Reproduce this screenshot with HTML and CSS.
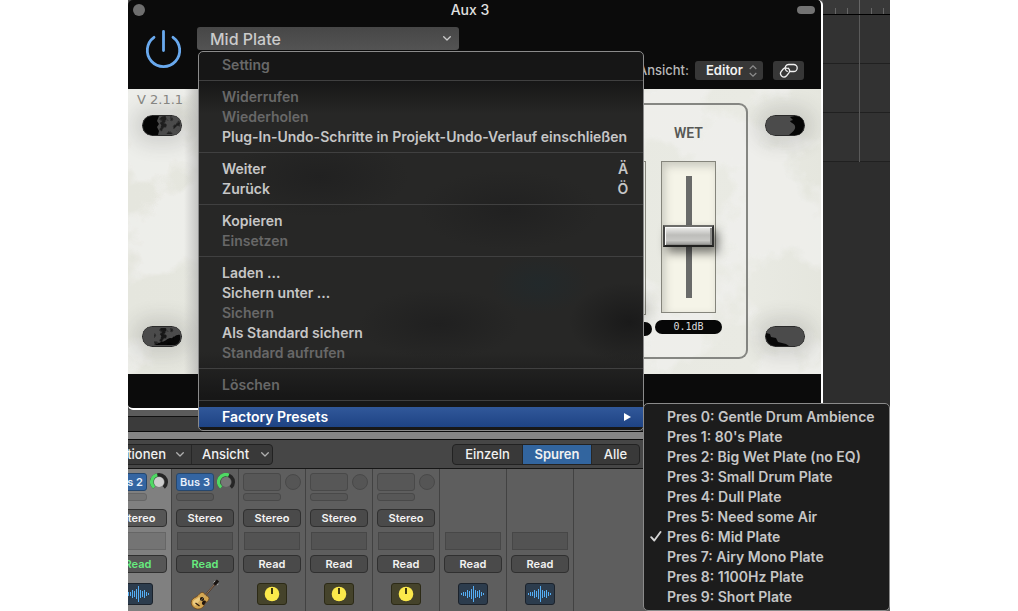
FILE: index.html
```html
<!DOCTYPE html>
<html lang="de">
<head>
<meta charset="utf-8">
<meta name="viewport" content="width=device-width, initial-scale=1">
<title>Aux 3</title>
<link rel="stylesheet" href="styles.css">
</head>
<body>
<svg class="defs" aria-hidden="true">
  <defs>
    <filter id="grunge" x="0" y="0" width="1" height="1">
      <feTurbulence type="fractalNoise" baseFrequency="0.16" numOctaves="3" seed="4"/>
      <feColorMatrix values="0 0 0 0 0  0 0 0 0 0  0 0 0 0 0  5 0 0 0 -2.4"/>
      <feComposite in2="SourceGraphic" operator="in"/>
    </filter>
    <filter id="plaster" x="0" y="0" width="1" height="1" color-interpolation-filters="sRGB">
      <feTurbulence type="fractalNoise" baseFrequency="0.012" numOctaves="5" seed="11"/>
      <feColorMatrix values="0 0 0 0 0.94  0 0 0 0 0.94  0 0 0 0 0.93  9 0 0 0 -4.2"/>
      <feComposite in2="SourceGraphic" operator="in"/>
    </filter>
    <symbol id="wave" viewBox="0 0 24 16">
      <path d="M.5 7v2M2.5 6v4M4.500 6v4M6.500 4v8M8.500 5v6M10.500 3v10M12.500 0v16M14.500 4v8M16.500 5v6M18.500 4v8M20.500 6v4M22.500 7v2" stroke="#55aef5" stroke-width="1"/>
    </symbol>
    <symbol id="dial" viewBox="0 0 16 16">
      <circle cx="8" cy="8" r="7.300" fill="#fbe94b"/>
      <path d="M8 2v6" stroke="#3f3a12" stroke-width="2"/>
    </symbol>
    <symbol id="bolt" viewBox="0 0 40 21">
      <rect x="0.500" y="0.500" width="39" height="20" rx="9" fill="#4b4b4b" stroke="#2a2a2a"/>
    </symbol>
    <symbol id="chev" viewBox="0 0 8 5">
      <path d="M.7.7 4 4 7.300.7" fill="none" stroke="currentColor" stroke-width="1.300" stroke-linecap="round" stroke-linejoin="round"/>
    </symbol>
  </defs>
</svg>
<main class="desk">
  <div class="arrange">
    <section class="plugin" aria-label="Aux 3">
      <header class="head">
        <div class="titlebar">
          <button class="close" aria-label="Schließen"></button>
          <h1 class="title">Aux 3</h1>
          <button class="pill" aria-label="Symbolleiste"></button>
        </div>
        <div class="tools">
          <button class="power" aria-label="Ein/Aus">
            <svg width="38" height="41" viewBox="0 0 38 41" fill="none" stroke="#69a9ee" stroke-width="2.800" stroke-linecap="round"><path d="M18.500 3.500v19M9 9.300a16.200 16.200 0 1 0 19 0"/></svg>
          </button>
          <div class="tool-rows">
            <button class="preset" aria-haspopup="menu" aria-expanded="true"><span>Mid Plate</span><svg width="8" height="5"><use href="#chev"/></svg></button>
            <div class="view">
              <label for="view">Ansicht:</label>
              <span class="select-wrap">
                <select id="view"><option>Editor</option></select>
                <svg class="updown" width="8" height="12" viewBox="0 0 8 12" fill="none" stroke="#8c8c8c" stroke-width="1.200"><path d="M.7 4 4 .8 7.300 4M.7 8 4 11.200 7.300 8"/></svg>
              </span>
              <button class="link" aria-label="Verknüpfen">
                <svg width="20" height="15" viewBox="0 0 20 15" fill="none" stroke="#f0f0f0" stroke-width="1.300" stroke-linecap="round"><path d="M8.200 5.300a3.600 3.600 0 0 0-4 .7L2.300 8.300a3.600 3.600 0 0 0 .3 4.700 3.600 3.600 0 0 0 5-.3l2.300-2.800a3.600 3.600 0 0 0-.6-4.700"/><path d="M11.300 8.500h3.400a3.500 3.500 0 0 0 0-7H9.600a3.500 3.500 0 0 0-3.200 4.900c.3.900 1 1.600 1.900 1.900"/></svg>
              </button>
            </div>
          </div>
        </div>
      </header>
      <div class="face">
        <svg class="plaster" aria-hidden="true"><rect width="100%" height="100%" filter="url(#plaster)"/></svg>
        <div class="rail rail-left">
          <span class="version">V 2.1.1</span>
          <svg class="bolt" width="40" height="21"><use href="#bolt"/><path d="M9 1h8l-2 5 2 3-2 3 2 4-1 4H9a9 9 0 0 1-8-9.500A9 9 0 0 1 9 1z" fill="#050505"/><rect x="15" y="1" width="23" height="18" rx="8" filter="url(#grunge)" opacity=".6"/></svg>
          <svg class="bolt" width="40" height="21"><use href="#bolt"/><path d="M38 9c-5-1-6 4-10 3-4 1-5 4-9 4l-6 3h20c4-1 6-5 5-10z" fill="#080808"/><rect x="12" y="2" width="20" height="17" filter="url(#grunge)" opacity=".7"/></svg>
        </div>
        <div class="panel">
          <div class="prev-slot"><span></span></div>
          <div class="wet">
            <label for="wet">WET</label>
            <div class="fader"><input id="wet" type="range" min="0" max="100" value="51"></div>
            <output for="wet">0.1dB</output>
          </div>
        </div>
        <div class="rail rail-right">
          <svg class="bolt" width="40" height="21"><use href="#bolt"/><path d="M30 1c6 0 9 4 9 9s-3 10-8 10h-7c3-3 7-5 6-9-1-3-4-3-5-5l3-1-3-3z" fill="#050505"/></svg>
          <svg class="bolt" width="40" height="21"><use href="#bolt"/><path d="M1 7l4 1 1 3 5 1 2 4 8 2 3 2H10C4 20 0 14 1 7z" fill="#080808"/></svg>
        </div>
      </div>
      <div class="foot"></div>
    </section>
    <div class="timeline"><div class="ruler"></div><div class="tracks"></div></div>
  </div>
  <div class="divider"></div>
  <div class="substrip"></div>
  <div class="splitter"></div>
  <div class="mixbar">
    <div class="group opts">
      <button><span>Optionen</span><svg width="8" height="5"><use href="#chev"/></svg></button>
      <button><span>Ansicht</span><svg width="8" height="5"><use href="#chev"/></svg></button>
    </div>
    <div class="group tabs">
      <button>Einzeln</button><button class="on" aria-pressed="true">Spuren</button><button>Alle</button>
    </div>
  </div>
  <div class="mixer">
    <div class="strip selected">
      <div class="send"><button class="bus">Bus 2</button><svg width="18" height="18" viewBox="0 0 18 18"><circle cx="9" cy="9" r="5" fill="#cdcdcd"/><g fill="none" stroke-width="3.400"><path d="M4.200 14.500A7.300 7.300 0 1 1 13.800 14.500" stroke="#262626"/><path d="M4.200 14.500A7.300 7.300 0 0 1 7.300 1.900" stroke="#4fd964"/></g></svg></div>
      <div class="send-low"></div>
      <button class="key">Stereo</button><div class="group-slot"></div><button class="key read">Read</button>
      <div class="icon wave"><svg width="24" height="16"><use href="#wave"/></svg></div>
    </div>
    <div class="strip">
      <div class="send"><button class="bus">Bus 3</button><svg width="18" height="18" viewBox="0 0 18 18"><circle cx="9" cy="9" r="5" fill="#777"/><g fill="none" stroke-width="3.400"><path d="M4.200 14.500A7.300 7.300 0 1 1 13.800 14.500" stroke="#262626"/><path d="M4.200 14.500A7.300 7.300 0 0 1 11.800 2.200" stroke="#4fd964"/></g></svg></div>
      <div class="send-low"></div>
      <button class="key">Stereo</button><div class="group-slot"></div><button class="key read">Read</button>
      <div class="icon guitar"><svg width="30" height="32" viewBox="0 0 30 32"><path d="M13 20 26 5" stroke="#4b3023" stroke-width="1.800"/><path d="M24.500 6.500 28 2.500" stroke="#181310" stroke-width="3"/><path d="M23.500 4.500 25 3M27 7l1.500-1" stroke="#aaa" stroke-width="1"/><path d="M10 15.500c2-2 4-1 5 1s4 1 4 4-3 3-4 5-2 5-6 5.500S1 28 1.200 24.500 4 20 6 19s2-2 4-3.500z" fill="#d3a651" stroke="#6b431c" stroke-width=".8"/><path d="M3 24c1-3 4-3 6-5l2 2-6 7c-1-1-2.500-2-2-4z" fill="#edcb80"/><circle cx="12" cy="21" r="2.100" fill="#1c130c"/><path d="M13 23c2-1 3 0 3 1l-2 3c-2 0-3-2-1-4z" fill="#20150d"/><path d="m5.500 25 4 3" stroke="#2b1a0e" stroke-width="1.200"/><path d="m8 26 16-19" stroke="#c9b48b" stroke-width=".5"/></svg></div>
    </div>
    <div class="strip">
      <div class="send"><span class="bus-empty"></span><span class="knob-empty"></span></div>
      <div class="send-low"></div>
      <button class="key">Stereo</button><div class="group-slot"></div><button class="key">Read</button>
      <div class="icon dial"><svg width="16" height="16"><use href="#dial"/></svg></div>
    </div>
    <div class="strip">
      <div class="send"><span class="bus-empty"></span><span class="knob-empty"></span></div>
      <div class="send-low"></div>
      <button class="key">Stereo</button><div class="group-slot"></div><button class="key">Read</button>
      <div class="icon dial"><svg width="16" height="16"><use href="#dial"/></svg></div>
    </div>
    <div class="strip">
      <div class="send"><span class="bus-empty"></span><span class="knob-empty"></span></div>
      <div class="send-low"></div>
      <button class="key">Stereo</button><div class="group-slot"></div><button class="key">Read</button>
      <div class="icon dial"><svg width="16" height="16"><use href="#dial"/></svg></div>
    </div>
    <div class="strip bare">
      <div class="group-slot"></div><button class="key">Read</button>
      <div class="icon wave"><svg width="24" height="16"><use href="#wave"/></svg></div>
    </div>
    <div class="strip bare">
      <div class="group-slot"></div><button class="key">Read</button>
      <div class="icon wave"><svg width="24" height="16"><use href="#wave"/></svg></div>
    </div>
  </div>

  <div class="menu settings" role="menu">
    <button role="menuitem" disabled>Setting</button>
    <hr>
    <button role="menuitem" disabled>Widerrufen</button>
    <button role="menuitem" disabled>Wiederholen</button>
    <button role="menuitem">Plug-In-Undo-Schritte in Projekt-Undo-Verlauf einschließen</button>
    <hr>
    <button role="menuitem"><span>Weiter</span><kbd>Ä</kbd></button>
    <button role="menuitem"><span>Zurück</span><kbd>Ö</kbd></button>
    <hr>
    <button role="menuitem">Kopieren</button>
    <button role="menuitem" disabled>Einsetzen</button>
    <hr>
    <button role="menuitem">Laden ...</button>
    <button role="menuitem">Sichern unter ...</button>
    <button role="menuitem" disabled>Sichern</button>
    <button role="menuitem">Als Standard sichern</button>
    <button role="menuitem" disabled>Standard aufrufen</button>
    <hr>
    <button role="menuitem" disabled>Löschen</button>
    <hr>
    <button role="menuitem" class="active" aria-haspopup="menu" aria-expanded="true"><span>Factory Presets</span><svg class="arrow" width="7" height="8" viewBox="0 0 7 8"><path d="M0 0v8l7-4z" fill="#fff"/></svg></button>
  </div>
  <div class="menu presets" role="menu">
    <button role="menuitemradio">Pres 0: Gentle Drum Ambience</button>
    <button role="menuitemradio">Pres 1: 80's Plate</button>
    <button role="menuitemradio">Pres 2: Big Wet Plate (no EQ)</button>
    <button role="menuitemradio">Pres 3: Small Drum Plate</button>
    <button role="menuitemradio">Pres 4: Dull Plate</button>
    <button role="menuitemradio">Pres 5: Need some Air</button>
    <button role="menuitemradio" class="checked" aria-checked="true"><svg class="tick" width="12" height="11" viewBox="0 0 12 11"><path d="M1.200 6.200 4.300 9.500 10.500 1" fill="none" stroke="#d4d4d4" stroke-width="1.900" stroke-linecap="round" stroke-linejoin="round"/></svg>Pres 6: Mid Plate</button>
    <button role="menuitemradio">Pres 7: Airy Mono Plate</button>
    <button role="menuitemradio">Pres 8: 1100Hz Plate</button>
    <button role="menuitemradio">Pres 9: Short Plate</button>
  </div>
</main>
</body>
</html>
```
FILE: styles.css
```css
* { box-sizing: border-box; }
html, body { margin: 0; background: #fff; }
body { font: 500 13px/20px Inter, "Liberation Sans", sans-serif; color: #ddd; }
button, select { font: inherit; color: inherit; border: 0; margin: 0; padding: 0; background: none; }
svg { display: block; flex: none; }
.defs { position: absolute; width: 0; height: 0; }

.desk {
  position: relative;
  margin: 0 128px;
  min-height: 100vh;
  overflow: hidden;
  display: flex;
  flex-direction: column;
  background: #5e5e5e;
}

/* plug-in window */
.arrange { display: flex; background: #4d4d4d; }
.plugin {
  flex: 1;
  min-width: 0;
  border: solid #fff;
  border-width: 0 2px 2px 0;
  border-radius: 5px;
  background: #0b0b0b;
}
.head { height: 89px; }
.titlebar {
  display: grid;
  grid-template-columns: 1fr auto 1fr;
  align-items: center;
  height: 20px;
  padding: 0 6px 0 5px;
}
.title { margin: 0 8px 0 0; font-size: 14px; font-weight: 500; line-height: 20px; color: #e0e0e0; }
.close { width: 12px; height: 12px; border-radius: 50%; background: #6e6e6e; }
.pill { width: 18px; height: 8px; border-radius: 4px; background: #737373; justify-self: end; }
.tools { display: flex; }
.power { width: 69px; padding: 8px 0 0 17px; align-self: flex-start; }
.tool-rows { flex: 1; padding-top: 7px; }
.preset {
  display: flex;
  align-items: center;
  justify-content: space-between;
  width: 262px;
  height: 23px;
  padding: 0 8px 0 13px;
  border-radius: 3px;
  background: linear-gradient(#474747, #535353);
  font-size: 16px;
  color: #cbcbcb;
}
.view { display: flex; justify-content: flex-end; align-items: center; padding: 10px 17px 0 0; color: #b9b9b9; }
.select-wrap { position: relative; margin: 0 10px 0 6px; }
.view select {
  appearance: none;
  display: block;
  width: 68px;
  height: 19px;
  padding-left: 11px;
  border-radius: 3px;
  background: #373737;
  color: #f2f2f2;
  font-weight: 600;
  line-height: 19px;
}
.updown { position: absolute; right: 6px; top: 4px; pointer-events: none; }
.link { width: 31px; height: 19px; padding: 2px 6px; border-radius: 3px; background: #373737; }

.face {
  position: relative;
  display: flex;
  height: 285px;
  background: linear-gradient(90deg, #e5e6de, #e9eae3 90%, #e5e6de);
}
.plaster { position: absolute; width: 100%; height: 100%; opacity: .8; }
.rail { position: relative; display: flex; flex-direction: column; justify-content: space-between; }
.rail-left { width: 70px; padding: 3px 0 27px 14px; background: linear-gradient(90deg, transparent 80%, #aaa9); }
.rail-left .bolt:first-of-type { margin: 7px 0 auto; }
.rail-right { width: 73px; padding: 26px 0 27px 17px; }
.bolt { border-radius: 10px; box-shadow: 0 0 18px 10px rgba(60, 60, 55, .14); }
.version { margin-left: -5px; font: 13px/16px "DejaVu Sans", sans-serif; color: #858581; position: relative; }
.panel {
  position: relative;
  flex: 1;
  display: flex;
  justify-content: flex-end;
  gap: 9px;
  margin: 14px 0 15px;
  padding-right: 24px;
  border: 2px solid #858682;
  border-left: 0;
  border-radius: 0 9px 9px 0;
}
.prev-slot { display: flex; flex-direction: column; align-items: center; width: 67px; padding-top: 56px; }
.prev-slot::before { content: ""; width: 52px; height: 152px; border: 1px solid #85857c; }
.prev-slot span { width: 67px; height: 14px; margin-top: 7px; border-radius: 7px; background: #070707; box-shadow: -8px -20px 18px rgba(0, 0, 0, .5); }
.wet { display: flex; flex-direction: column; align-items: center; width: 67px; margin-left: -6px; padding-top: 18px; }
.wet label { font: 600 14px/20px Roboto, sans-serif; color: #575855; }
.fader {
  display: flex;
  justify-content: center;
  align-items: center;
  width: 55px;
  height: 152px;
  margin-top: 18px;
  border: 1px solid #85857c;
  background: #f5f4e8;
  box-shadow: inset 3px 4px 8px #c9c9bf;
}
.fader input {
  appearance: none;
  writing-mode: vertical-lr;
  direction: rtl;
  width: 51px;
  height: 122px;
  margin: 0;
  background: linear-gradient(#696a69, #696a69) center / 6px 100% no-repeat;
}
.fader input::-webkit-slider-thumb {
  appearance: none;
  width: 51px;
  height: 22px;
  border: 2px solid;
  border-color: #6c6c69 #30302f #20201f #454543;
  background: linear-gradient(#efefed, #bdbdba 45%, #c8c8c5 75%, #929290);
  box-shadow: inset 1px 1px #fafafa, inset -2px -1px #8c8c89, 4px 6px 10px rgba(0, 0, 0, .5);
}
.wet output {
  width: 67px;
  height: 14px;
  margin-top: 7px;
  border-radius: 7px;
  background: #070707;
  color: #ddd;
  text-align: center;
  font: 10px/14px "DejaVu Sans Mono", monospace;
}
.foot { height: 34px; }

.timeline { width: 67px; display: flex; flex-direction: column; background: #2d2d2d; }
.ruler {
  height: 15px;
  border-bottom: 1px solid #000;
  background:
    linear-gradient(#666, #666) 36px 0 / 1px 14px no-repeat,
    repeating-linear-gradient(90deg, #666 0 1px, transparent 1px 12px) 12px 8px / 60px 6px no-repeat,
    #393939;
}
.tracks {
  height: 147px;
  background:
    linear-gradient(#5a5a5a, #5a5a5a) 36px 0 / 1px 100% no-repeat,
    repeating-linear-gradient(transparent 0 48px, #202020 48px 49px),
    #323232;
}

.divider { height: 7px; background: #5b5b5b; border-bottom: 1px solid #111; }
.substrip { height: 14px; background: #3b3b3b; }
.splitter { height: 9px; border: solid #0b0b0b; border-width: 1px 0; background: #858585; }

/* mixer */
.mixbar {
  display: flex;
  height: 29px;
  padding: 4px 0;
  align-items: flex-start;
  background: #464646;
  border-bottom: 1px solid #161616;
  font-size: 13px;
  color: #f1f1f1;
}
.group { display: flex; height: 21px; border: 1px solid #222; border-radius: 4px; background: #393939; overflow: hidden; }
.group button { line-height: 19px; }
.group button + button { border-left: 1px solid #272727; }
.opts { margin-left: -31px; }
.opts button { display: flex; align-items: center; gap: 14px; padding: 0 6px 0 10px; }
.opts button:first-child { width: 93px; justify-content: flex-end; gap: 10px; padding: 0 7px 0 0; }
.opts svg { color: #b0b0b0; }
.opts button:last-child { width: 81px; gap: 12px; }
.tabs { margin: 0 250px 0 auto; }
.tabs button { width: 69px; }
.tabs button:last-child { width: 48px; }
.tabs .on { background: #32659f; font-weight: 600; }

.mixer { display: flex; flex: 1; margin-left: -23px; font-size: 11px; }
.strip {
  display: flex;
  flex-direction: column;
  width: 67px;
  min-height: 142px;
  padding: 4px 4px 0;
  border-right: 1px solid #424242;
}
.selected { background: #808080; }
.send { display: flex; align-items: center; justify-content: space-between; width: 59px; height: 18px; }
.bus { width: 38px; height: 18px; border: 1px solid #26476d; border-radius: 3px; background: #3465a2; color: #e8f0fa; font-weight: 600; line-height: 16px; }
.bus-empty { width: 38px; height: 18px; border: 1px solid #494949; border-radius: 3px; background: #575757; }
.knob-empty { width: 16px; height: 16px; margin-right: 1px; border: 1px solid #494949; border-radius: 50%; background: #555; }
.send-low { width: 38px; height: 8px; margin: 2px 0 8px; border: 1px solid #494949; border-radius: 3px; background: #575757; }
.key { width: 58px; height: 18px; border: 1px solid #303030; border-radius: 4px; background: #4a4a4a; color: #f2f2f2; font-weight: 600; line-height: 16px; }
.group-slot { width: 56px; height: 18px; margin: 5px 1px; border: 1px solid #474747; background: #535353; }
.bare .group-slot { margin-top: 59px; }
.selected .send-low, .selected .group-slot { background: #747474; border-color: #666; }
.selected .key { background: #565656; }
.strip .read { color: #67ec7f; }
.icon { display: flex; align-items: center; justify-content: center; width: 30px; height: 22px; margin: 10px 14px 0; border-radius: 3px; border: 1px solid #1b222b; }
.wave { background: #2c3c4d; }
.dial { background: #45432b; border-color: #2c2a16; }
.guitar { height: 32px; margin-top: 5px; border: 0; }

/* menus */
.menu {
  position: absolute;
  display: flex;
  flex-direction: column;
  padding: 3px 0;
  border: 1px solid #8b8b8b;
  border-radius: 5px;
  background: #1c1c1c;
  font-size: 14px;
  font-weight: 600;
  color: #c6c6c6;
}
.menu button {
  display: flex;
  justify-content: space-between;
  align-items: center;
  padding: 0 11px 0 23px;
  line-height: 20px;
  text-align: left;
  white-space: nowrap;
}
.menu button:disabled { color: #686868; }
.menu hr { width: 100%; height: 1px; margin: 5px 0 6px; border: 0; background: #404040; }
.menu kbd { width: 18px; font: inherit; text-align: center; }
.settings {
  top: 51px;
  left: 70px;
  width: 446px;
  background:
    radial-gradient(ellipse 50px 30px at 340px 232px, #22292b, transparent),
    radial-gradient(ellipse 90px 40px at 120px 125px, #212121, transparent),
    radial-gradient(ellipse 90px 40px at 310px 158px, #212121, transparent),
    radial-gradient(ellipse 80px 35px at 240px 272px, #202020, transparent),
    radial-gradient(ellipse 60px 40px at 430px 270px, #1a1a1a, transparent),
    linear-gradient(#161616 0 28px, #272726 62px 300px, #171717 345px);
}
.settings .active { background: linear-gradient(#31589a, #1e4384); color: #fff; }
.arrow { margin-right: 1px; }
.presets { top: 403px; right: 0; width: 247px; }
.presets .checked { position: relative; }
.tick { position: absolute; left: 6px; top: 4px; }
```
